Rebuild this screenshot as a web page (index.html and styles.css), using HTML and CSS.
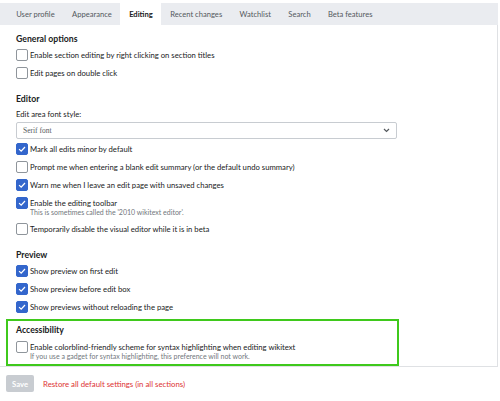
FILE: index.html
```html
<!DOCTYPE html>
<html>
<head>
<meta charset="utf-8">
<link rel="stylesheet" href="styles.css">
</head>
<body>
<div class="page">
  <div class="tabs">
    <span class="tab">User profile</span>
    <span class="tab">Appearance</span>
    <span class="tab active">Editing</span>
    <span class="tab">Recent changes</span>
    <span class="tab">Watchlist</span>
    <span class="tab">Search</span>
    <span class="tab">Beta features</span>
  </div>
  <div class="panel">
    <section class="sec">
      <h3>General options</h3>
      <label class="opt"><span class="cb"></span><span class="txt">Enable section editing by right clicking on section titles</span></label>
      <label class="opt"><span class="cb"></span><span class="txt">Edit pages on double click</span></label>
    </section>
    <section class="sec">
      <h3>Editor</h3>
      <div class="lbl">Edit area font style:</div>
      <div class="select"><span>Serif font</span><svg class="chev" width="7" height="5" viewBox="0 0 7 5"><path d="M1 1 L3.5 3.5 L6 1" fill="none" stroke="#54595d" stroke-width="1.2"/></svg></div>
      <label class="opt"><span class="cb on"><svg viewBox="0 0 12 12"><path d="M2.5 6.2 L5 8.6 L9.6 3.6" fill="none" stroke="#fff" stroke-width="1.5"/></svg></span><span class="txt">Mark all edits minor by default</span></label>
      <label class="opt"><span class="cb"></span><span class="txt">Prompt me when entering a blank edit summary (or the default undo summary)</span></label>
      <label class="opt"><span class="cb on"><svg viewBox="0 0 12 12"><path d="M2.5 6.2 L5 8.6 L9.6 3.6" fill="none" stroke="#fff" stroke-width="1.5"/></svg></span><span class="txt">Warn me when I leave an edit page with unsaved changes</span></label>
      <label class="opt with-help"><span class="cb on"><svg viewBox="0 0 12 12"><path d="M2.5 6.2 L5 8.6 L9.6 3.6" fill="none" stroke="#fff" stroke-width="1.5"/></svg></span><span class="txt">Enable the editing toolbar<span class="help">This is sometimes called the '2010 wikitext editor'.</span></span></label>
      <label class="opt"><span class="cb"></span><span class="txt">Temporarily disable the visual editor while it is in beta</span></label>
    </section>
    <section class="sec">
      <h3>Preview</h3>
      <label class="opt"><span class="cb on"><svg viewBox="0 0 12 12"><path d="M2.5 6.2 L5 8.6 L9.6 3.6" fill="none" stroke="#fff" stroke-width="1.5"/></svg></span><span class="txt">Show preview on first edit</span></label>
      <label class="opt"><span class="cb on"><svg viewBox="0 0 12 12"><path d="M2.5 6.2 L5 8.6 L9.6 3.6" fill="none" stroke="#fff" stroke-width="1.5"/></svg></span><span class="txt">Show preview before edit box</span></label>
      <label class="opt"><span class="cb on"><svg viewBox="0 0 12 12"><path d="M2.5 6.2 L5 8.6 L9.6 3.6" fill="none" stroke="#fff" stroke-width="1.5"/></svg></span><span class="txt">Show previews without reloading the page</span></label>
    </section>
    <section class="sec access">
      <h3>Accessibility</h3>
      <label class="opt"><span class="cb"></span><span class="txt">Enable colorblind-friendly scheme for syntax highlighting when editing wikitext<span class="help">If you use a gadget for syntax highlighting, this preference will not work.</span></span></label>
    </section>
  </div>
  <div class="actions">
    <span class="save">Save</span>
    <span class="restore">Restore all default settings (in all sections)</span>
  </div>
</div>
</body>
</html>
```
FILE: styles.css
```css
* { box-sizing: border-box; }
html, body { margin: 0; padding: 0; background: #fff; }
body {
  font-family: Lato, "Liberation Sans", sans-serif;
  color: #202122;
  font-size: 7.7px;
  width: 500px;
  height: 401px;
  overflow: hidden;
}
.page { padding-top: 3px; }
.tabs {
  display: flex;
  height: 22px;
  width: 498px;
  background: #eaecf0;
  padding-left: 7.5px;
}
.tab {
  display: flex;
  align-items: center;
  padding: 0 8.7px;
  color: #54595d;
  font-size: 7.6px;
}
.tab.active {
  background: #fff;
  color: #202122;
  font-weight: bold;
}
.panel {
  width: 498px;
  border-right: 1px solid #dfe1e4;
  border-bottom: 1px solid #dfe1e4;
  padding: 8px 0 0 16px;
}
.sec + .sec { margin-top: 13px; }
h3 {
  margin: 0 0 4px 0;
  font-size: 8.7px;
  font-weight: bold;
  line-height: 12px;
  color: #202122;
}
.opt {
  display: flex;
  align-items: flex-start;
  margin-bottom: 5px;
}
.opt.with-help { margin-bottom: 7px; }
.cb {
  flex: none;
  width: 12px;
  height: 12px;
  border: 1px solid #8f959b;
  border-radius: 2px;
  background: #fff;
  margin-right: 2px;
}
.cb.on { background: #36c; border-color: #36c; }
.cb svg { display: block; width: 10px; height: 10px; }
.txt {
  display: flex;
  flex-direction: column;
  line-height: 13px;
  font-size: 7.7px;
}
.help {
  font-size: 7px;
  color: #72777d;
  line-height: 8px;
  margin-top: -2px;
}
.lbl { line-height: 11px; margin-bottom: 2px; }
.select {
  width: 381px;
  height: 17px;
  border: 1px solid #c8ccd1;
  border-radius: 2px;
  background: #fff;
  display: flex;
  align-items: center;
  justify-content: space-between;
  padding: 0 6px;
  font-family: "Liberation Serif", serif;
  font-size: 7.5px;
  color: #54595d;
  margin-bottom: 4px;
}
.sec.access {
  width: 393px;
  border: 2px solid #3fc91c;
  margin: 2px 0 0 -10px;
  padding: 3px 8px 4px 8px;
}
.access h3 { margin-bottom: 5px; }
.access .opt { margin-bottom: 0; }
.actions {
  display: flex;
  align-items: center;
  padding: 8px 0 0 6px;
}
.save {
  width: 28px;
  height: 17px;
  background: #c8ccd1;
  color: #fff;
  border-radius: 2px;
  font-weight: bold;
  font-size: 7.7px;
  display: flex;
  align-items: center;
  justify-content: center;
  margin-right: 9px;
}
.restore { color: #d33; font-size: 7.8px; }
```
